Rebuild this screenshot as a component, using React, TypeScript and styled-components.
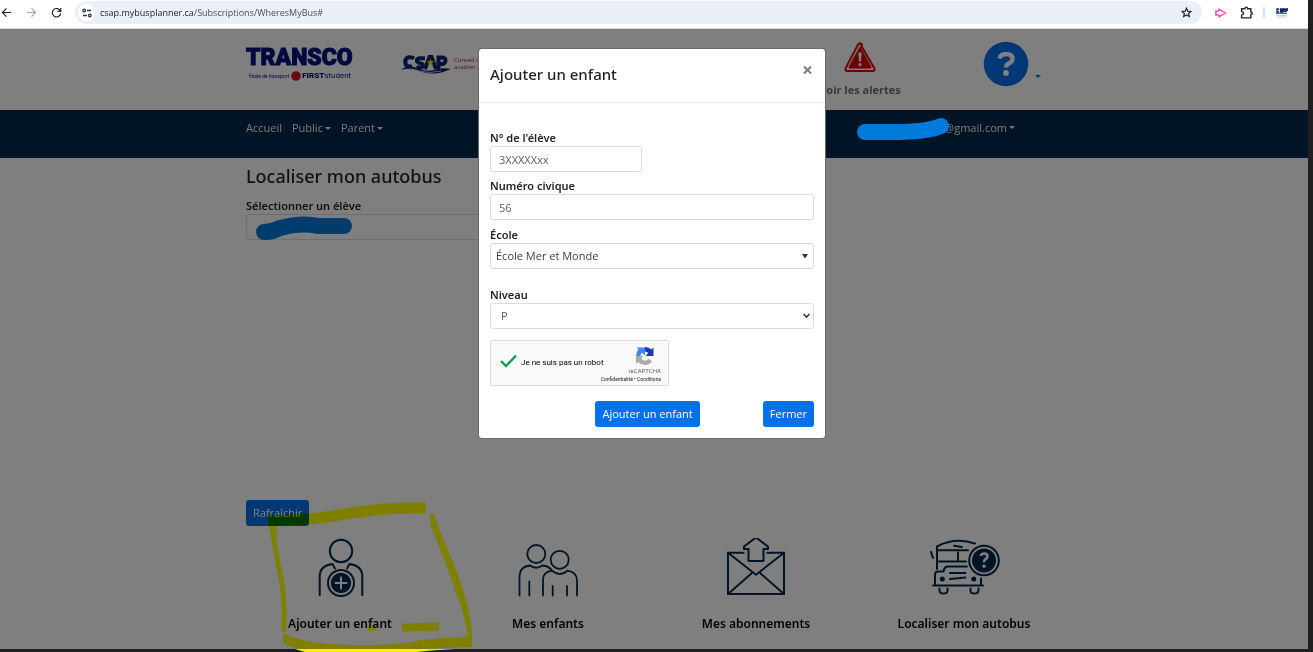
import React from "react";
import styled, { createGlobalStyle } from "styled-components";

const GlobalStyle = createGlobalStyle`
  * { box-sizing: border-box; }
  html, body { margin: 0; padding: 0; }
  body {
    font-family: "Open Sans", "Noto Sans", sans-serif;
    font-size: 11px;
    line-height: 16px;
    color: #212529;
    background: #1f1f1f;
  }
  button, input, select { font: inherit; color: inherit; }
  h1, h2, p { margin: 0; }
  a { color: inherit; text-decoration: none; }
`;

const navy = "#00294a";

/* Window */
const Screen = styled.div`
  display: flex;
  flex-direction: column;
  min-height: 100vh;
  padding: 0 5px 3px 0;
  background: #1f1f1f;
`;

const BrowserBar = styled.header`
  display: flex;
  align-items: center;
  height: 29px;
  padding: 1px 0 4px;
  overflow: hidden;
  background: #fff;
  border-bottom: 1px solid #d8d8d8;
`;

const IconButton = styled.button<{ $w?: number }>`
  display: flex;
  align-items: center;
  justify-content: center;
  flex: none;
  width: ${(p) => p.$w ?? 25}px;
  height: 22px;
  padding: 0;
  border: 0;
  background: none;
`;

const BackButtons = styled.div`
  display: flex;
  width: 75px;
  padding-right: 6px;
  margin-left: -6px;
  margin-right: 6px;
`;

const AddressPill = styled.div`
  display: flex;
  flex: 1;
  align-items: center;
  height: 23px;
  padding: 0 4px 0 3px;
  border-radius: 12px;
  background: #eaf0fa;
`;

const SiteInfo = styled.button`
  display: flex;
  align-items: center;
  justify-content: center;
  width: 17px;
  height: 17px;
  padding: 0;
  border: 0;
  border-radius: 50%;
  background: #fff;
`;

const Address = styled.p`
  flex: 1;
  padding-left: 5px;
  font-size: 9px;
  color: #4b4f54;
  white-space: nowrap;
  span { color: #1b1d20; }
`;

const Extensions = styled.div`
  display: flex;
  align-items: center;
  width: 106px;
  padding-left: 5px;
`;

const Divider = styled.span`
  width: 2px;
  height: 11px;
  margin: 0 4px;
  background: #cfe2fb;
`;

/* Page */
const Stage = styled.div`
  position: relative;
  display: flex;
  flex: 1;
  flex-direction: column;
  background: #fff;
`;

const Band = styled.div<{ $bg?: string; $h?: number }>`
  padding-right: 4px;
  background: ${(p) => p.$bg ?? "#fff"};
  ${(p) => (p.$h ? `height: ${p.$h}px;` : "")}
`;

const Container = styled.div`
  width: 100%;
  max-width: 832px;
  margin: 0 auto;
  padding: 0 10px;
`;

const HeaderRow = styled(Container)`
  display: grid;
  grid-template-columns: 155px 1fr 208px 94px;
  padding-top: 12px;
`;

const Transco = styled.a`
  display: block;
  padding-top: 3px;
  color: #00127c;
  white-space: nowrap;
`;

const TranscoName = styled.strong`
  display: block;
  font-family: Roboto, sans-serif;
  font-size: 23px;
  line-height: 27px;
  font-weight: 900;
  -webkit-text-stroke: 1px #00127c;
`;

const TranscoTag = styled.span`
  display: flex;
  align-items: center;
  padding-left: 3px;
  font-family: Roboto, sans-serif;
  font-size: 5px;
  line-height: 10px;
  b { font-size: 8px; font-weight: 900; }
  em { font-size: 8px; font-style: normal; }
  svg { margin: 0 1px 0 2px; }
`;

const Csap = styled.a`
  display: flex;
  align-items: flex-start;
  padding-top: 13px;
  gap: 3px;
  color: #c8102e;
  font-size: 6px;
  line-height: 7px;
  white-space: nowrap;
`;

const CsapText = styled.span`
  display: flex;
  flex-direction: column;
  padding-top: 3px;
`;

const AlertLink = styled.a`
  display: flex;
  flex-direction: column;
  align-items: center;
  gap: 9px;
  font-weight: 700;
  color: #6c757d;
`;

const HelpButton = styled.button`
  display: flex;
  align-items: flex-end;
  align-self: start;
  padding: 0 0 0 19px;
  border: 0;
  background: none;
  color: #0070eb;
`;

const Caret = styled.i<{ $drop?: boolean }>`
  display: inline-block;
  width: 0;
  height: 0;
  margin: ${(p) => (p.$drop ? "0 0 9px 6px" : "0 0 2px 2px")};
  border: 3px solid transparent;
  border-top-color: currentColor;
  border-bottom: 0;
`;

const NavRow = styled(Container).attrs({ as: "nav" })`
  display: flex;
  gap: 10px;
  padding-top: 10px;
  color: #f0f0f0;
`;

const Account = styled.a`
  display: flex;
  align-items: center;
  height: 16px;
  margin-left: auto;
  margin-right: 43px;
  white-space: nowrap;
`;

const Scribble = styled.svg`
  position: relative;
  z-index: 4;
  flex: none;
  margin-right: -6px;
`;

const Main = styled.main`
  display: flex;
  flex: 1;
  flex-direction: column;
  padding-right: 4px;
`;

const Content = styled(Container)`
  display: flex;
  flex: 1;
  flex-direction: column;
  align-items: flex-start;
  padding-top: 5px;
`;

const PageTitle = styled.h1`
  font-family: "Noto Sans", "Open Sans", sans-serif;
  font-size: 18px;
  line-height: 26px;
  font-weight: 500;
  margin-bottom: 9px;
`;

const Label = styled.label`
  display: block;
  font-family: "Noto Sans", "Open Sans", sans-serif;
  font-weight: 600;
`;

const control = `
  display: block;
  height: 26px;
  border: 1px solid #d9dee3;
  border-radius: 3px;
  background: #fff;
  color: #5a6068;
`;

const PupilPicker = styled.div`
  position: relative;
  width: 50%;
`;

const PupilSelect = styled.select`
  ${control}
  width: 100%;
  appearance: none;
`;

const PupilScribble = styled.svg`
  position: absolute;
  z-index: 1;
  left: 10px;
  top: 1px;
`;

const MapArea = styled.div`
  flex: 1;
  min-height: 259px;
`;

const Button = styled.button`
  height: 26px;
  padding: 0 7px;
  border: 0;
  border-radius: 3px;
  background: #0070eb;
  color: #fff;
  white-space: nowrap;
`;

const Tiles = styled.div`
  display: grid;
  grid-template-columns: repeat(4, 1fr);
  align-self: stretch;
  margin: 10px -10px 0;
`;

const Tile = styled.a`
  position: relative;
  display: flex;
  flex-direction: column;
  align-items: center;
  gap: 17px;
  height: 113px;
  padding-top: 2px;
  font-family: "Noto Sans", "Open Sans", sans-serif;
  font-size: 12px;
  line-height: 18px;
  font-weight: 600;
  color: #000;
  svg { flex: none; }
`;

const Marker = styled.svg<{ $solid?: boolean }>`
  position: absolute;
  z-index: 2;
  left: 26px;
  top: -38px;
  pointer-events: none;
  mix-blend-mode: ${(p) => (p.$solid ? "normal" : "multiply")};
`;

/* Modal */
const Backdrop = styled.div`
  position: absolute;
  z-index: 1;
  inset: 0;
  background: rgba(0, 0, 0, 0.5);
`;

const ModalLayer = styled.div`
  position: absolute;
  z-index: 5;
  inset: 0;
  display: flex;
  align-items: flex-start;
  justify-content: center;
  padding: 20px 4px 0 0;
  pointer-events: none;
`;

const Modal = styled.section`
  width: 346px;
  border-radius: 3px;
  background: #fff;
  box-shadow: 0 0 0 1px #6b6b6b;
  pointer-events: auto;
`;

const ModalHeader = styled.header`
  display: flex;
  justify-content: space-between;
  height: 54px;
  padding: 13px 11px 0;
  border-bottom: 1px solid #e9ecef;
`;

const ModalTitle = styled.h2`
  font-family: "Noto Sans", "Open Sans", sans-serif;
  font-size: 15px;
  line-height: 24px;
  font-weight: 500;
`;

const Close = styled.button`
  height: 18px;
  padding: 0;
  border: 0;
  background: none;
  color: #7d7d7d;
`;

const ModalForm = styled.form`
  display: flex;
  flex-direction: column;
  padding: 27px 11px 11px;
`;

const Field = styled.div<{ $gap?: number }>`
  margin-bottom: ${(p) => p.$gap ?? 6}px;
`;

const TextInput = styled.input<{ $short?: boolean }>`
  ${control}
  width: ${(p) => (p.$short ? "152px" : "100%")};
  padding: 0 8px;
`;

const SelectBox = styled.div`
  position: relative;
  svg { position: absolute; right: 3px; top: 8px; pointer-events: none; }
`;

const Select = styled.select<{ $inset: number; $dark?: boolean }>`
  ${control}
  width: 100%;
  padding: 0 20px 0 ${(p) => p.$inset}px;
  appearance: none;
  ${(p) => (p.$dark ? "color: #3d4146;" : "")}
`;

const Captcha = styled.div`
  display: flex;
  width: 179px;
  height: 46px;
  margin-bottom: 15px;
  border: 1px solid #dcdcdc;
  border-radius: 2px;
  background: #f9f9f9;
  font-family: Roboto, sans-serif;
`;

const CaptchaCheck = styled.label`
  display: flex;
  flex: 1;
  align-items: center;
  gap: 4px;
  padding-left: 9px;
  font-size: 8px;
  white-space: nowrap;
  color: #000;
  svg { margin-bottom: 4px; }
`;

const Tick = styled.input`
  width: 17px;
  height: 20px;
  margin: 0;
  appearance: none;
  position: absolute;
`;

const CaptchaBrand = styled.div`
  display: flex;
  flex-direction: column;
  align-items: flex-end;
  width: 60px;
  margin-left: -10px;
  padding: 5px 7px 0 0;
  font-size: 6px;
  line-height: 8px;
  color: #666;
  white-space: nowrap;
  svg { margin: 0 6px 1px 0; }
`;

const CaptchaLinks = styled.span`
  font-size: 5px;
  color: #222;
`;

const Actions = styled.div`
  display: flex;
  justify-content: flex-end;
  gap: 63px;
`;

const AlertIcon = () => (
  <svg width="34" height="32" viewBox="0 0 34 32">
    <path d="M17 2.5 31.5 27.5Q32 30 29.5 30H4.500Q2 30 2.500 27.500L14.800 4Q17 .5 19.200 4Z" fill="#fff" stroke="#d80000" strokeWidth="2" strokeLinejoin="round" />
    <path d="M17 7 27.500 26.500H6.500Z" fill="#d80000" stroke="#d80000" strokeWidth="2" strokeLinejoin="round" />
    <path d="M15.300 11.500h3.400l-.7 9h-2z" fill="#fff" />
    <circle cx="17" cy="23.500" r="1.600" fill="#fff" />
  </svg>
);

const HelpIcon = () => (
  <svg width="46" height="46" viewBox="0 0 46 46">
    <circle cx="23" cy="23" r="22.300" fill="#0070eb" />
    <path d="M16.500 17.500q1-4.500 6.500-4.500 6.500 0 6.500 4.700 0 3-3.700 4.700-2.800 1.300-2.800 4.200" fill="none" stroke="#fff" strokeWidth="4.400" />
    <circle cx="23" cy="32" r="2.900" fill="#fff" />
  </svg>
);

const CsapIcon = () => (
  <svg width="50" height="20" viewBox="0 0 50 20" fill="none">
    <g stroke="#0b2470" strokeWidth="4">
      <path d="M13 4.500Q11 3 8 3.300 4 4 4.300 8.500 4.500 12 8 12.500h3" />
      <path d="M24 4.200h-5q-4 .5-3 3.300 1 1.500 4 2 3 1 1.500 3.200-1 1.300-6 .6" />
      <path d="M24 15 28.500 3h2L35 15" />
      <path d="M37.500 16V3.500h4q3.500.500 3 3.500-.5 3-4 3H38" />
    </g>
    <path d="M0 15.500q7-5 16-1.500 9 4 17 2 8-3 17-1-7 3-12 4-8 1.500-17-1Q9 13.500 0 15.500Z" fill="#0b2470" />
    <path d="M1 17q8-4 17 0 10 3 22 0" stroke="#fff" strokeWidth=".7" />
    <path d="m29.500 4.800 1.100 2.500 2.700.2-2.100 1.800.7 2.700-2.400-1.500-2.400 1.500.7-2.700-2.100-1.800 2.700-.2Z" fill="#ffd900" />
  </svg>
);

const FirstMark = () => (
  <svg width="10" height="10" viewBox="0 0 10 10">
    <circle cx="5" cy="5" r="4.800" fill="#e01a22" />
    <path d="M2 7.500Q3 3 8 2.500M4 8q.5-3 4-3.500" fill="none" stroke="#8c1016" strokeWidth=".8" />
  </svg>
);

const AddChildIcon = () => (
  <svg width="58" height="60" viewBox="0 0 58 60" fill="none" stroke={navy} strokeWidth="2" strokeLinecap="round">
    <circle cx="30" cy="13" r="11.200" />
    <path d="M8.700 57V37Q9.500 27.500 21.500 26l2.500 4.500M51.300 57V37Q50.500 27.500 38.500 26L36 30.500" />
    <circle cx="30" cy="45" r="13" />
    <circle cx="30" cy="45" r="9.200" fill={navy} />
    <path d="M30 39.500v11M24.500 45h11" stroke="#fff" />
  </svg>
);

const ChildrenIcon = () => (
  <svg width="62" height="60" viewBox="0 0 62 60" fill="none" stroke={navy} strokeWidth="1.800" strokeLinecap="round">
    <circle cx="19.300" cy="16" r="9" />
    <circle cx="42.700" cy="21.800" r="9" />
    <path d="M2.500 57.500V38Q3 28.500 13 27.500q6 4.500 12.500 0 7 .5 9.500 5.500M12.300 43.500v14M26 57.500V41q.5-7 9-8.300 8 6.500 15.500 0Q59.500 34 60 42v15.500M35.700 48v9.500M50 48v9.500" />
  </svg>
);

const MailIcon = () => (
  <svg width="60" height="60" viewBox="0 0 60 60" fill="none" stroke={navy} strokeWidth="2">
    <path d="M18.500 14.700H2V56h56V14.700H40.500M2 14.700l28 22 28-22M2 56l24-21M58 56 34 35" />
    <path d="M30-.5 42 8.500v2.500h-4.500v12h-15V11H18V8.500Z" fill="#fff" strokeLinejoin="round" />
  </svg>
);

const BusIcon = () => (
  <svg width="72" height="60" viewBox="-1 0 72 60" fill="none" stroke={navy} strokeWidth="2" strokeLinecap="round">
    <path d="M8 31V8.500Q26-1 46 5.500M8 12.200h31M10 23.500h27M29 14.500v8M25 7.800l8 1.200M2 14l2 6" />
    <path d="M38 28.500H18q-3 1-3.500 5H9q-3 0-3 3V47M21 35h15.500M21 41l15.500-1.500M4 47.500h50M52 40.500V47" />
    <path d="M10.500 50.500v2q0 3 4 3t4-3v-2M41.500 50.500v2q0 3 4 3t4-3v-2" />
    <circle cx="13.300" cy="41" r="1.500" fill={navy} />
    <circle cx="44.800" cy="41" r="1.500" fill={navy} />
    <circle cx="55" cy="22.500" r="14.800" />
    <circle cx="55" cy="22.500" r="11" fill={navy} />
    <path d="M51.700 18q.5-2.500 3.500-2.500 3.300 0 3.300 3 0 1.500-2 2.700-1.500 1-1.500 3" stroke="#fff" strokeWidth="2.600" strokeLinecap="butt" />
    <circle cx="55" cy="28.200" r="1.700" fill="#fff" stroke="none" />
  </svg>
);

const Stroke = ({ d, size = 11, color = "currentColor" }: { d: string; size?: number; color?: string }) => (
  <svg width={size} height={size} viewBox="0 0 12 12" fill="none" stroke={color} strokeWidth="1.300">
    <path d={d} />
  </svg>
);

export default function App() {
  return (
    <>
      <GlobalStyle />
      <Screen>
        <BrowserBar>
          <BackButtons>
            <IconButton aria-label="Précédent"><Stroke d="M11 6H1.500M6 1.500 1.500 6 6 10.500" /></IconButton>
            <IconButton aria-label="Suivant"><Stroke color="#a3a3a3" d="M1 6h9.500M6 1.500 10.500 6 6 10.500" /></IconButton>
            <IconButton aria-label="Actualiser"><Stroke d="M10.300 4.500A4.600 4.600 0 1 0 10.600 7M10.700 1v3.700H7" /></IconButton>
          </BackButtons>
          <AddressPill>
            <SiteInfo aria-label="Informations du site">
              <svg width="10" height="10" viewBox="0 0 10 10" fill="none" stroke="#333" strokeWidth="1.300">
                <circle cx="2.200" cy="2.500" r="1.300" /><path d="M5 2.500h4M1 7.500h4" /><circle cx="7.800" cy="7.500" r="1.300" />
              </svg>
            </SiteInfo>
            <Address><span>csap.mybusplanner.ca</span>/Subscriptions/WheresMyBus#</Address>
            <IconButton $w={24} aria-label="Ajouter aux favoris">
              <Stroke d="m6 1.300 1.400 3.200 3.500.3-2.600 2.300.8 3.400L6 8.700l-3.100 1.800.8-3.400L1.100 4.800l3.500-.3Z" />
            </IconButton>
          </AddressPill>
          <Extensions>
            <IconButton $w={26} aria-label="Extension">
              <svg width="13" height="12" viewBox="0 0 13 12" fill="none" stroke="#ff4fb3" strokeWidth="1.400">
                <path d="M5 4V2.300L11.700 6 5 9.700V8M5 4H1.800v1M5 8H1.800V7M1 6h2" />
              </svg>
            </IconButton>
            <IconButton $w={26} aria-label="Extensions">
              <Stroke size={13} d="M1.500 2.500h3q.2-1.500 1.300-1.500T7 2.500h3v3q1.300.2 1.300 1.300T10 8v3H1.500V8.500Q3.300 8 3.300 6.800T1.500 5Z" />
            </IconButton>
            <Divider />
            <IconButton $w={26} aria-label="Profil">
              <svg width="12" height="10" viewBox="0 0 12 10">
                <path d="M3 1H1v3h2M7 1H4.500v1.500h2V4h-2.500M7.500 4V1H9v3M10 4V1h1.500v2" stroke="#0b2470" strokeWidth="1.300" fill="none" />
                <path d="M0 5.200h11" stroke="#0b2470" /><path d="M1 7.500h10M1 9h10" stroke="#eeb0b4" strokeWidth=".8" />
              </svg>
            </IconButton>
          </Extensions>
        </BrowserBar>

        <Stage>
          <Band $h={81}>
            <HeaderRow>
              <Transco href="#">
                <TranscoName>TRANSCO</TranscoName>
                <TranscoTag>filiale de transport<FirstMark /><b>FIRST</b><em>student</em></TranscoTag>
              </Transco>
              <Csap href="#"><CsapIcon /><CsapText><span>Conseil scolaire</span><span>acadien provincial</span></CsapText></Csap>
              <AlertLink href="#"><AlertIcon />Voir les alertes</AlertLink>
              <HelpButton aria-label="Aide"><HelpIcon /><Caret $drop /></HelpButton>
            </HeaderRow>
          </Band>
          <Band $bg={navy} $h={48}>
            <NavRow>
              <a href="#">Accueil</a>
              <a href="#">Public<Caret /></a>
              <a href="#">Parent<Caret /></a>
              <Account href="#">
                <Scribble width="94" height="24" viewBox="0 0 94 24">
                  <path d="M9 16H36Q72 16 85 10" fill="none" stroke="#007ad9" strokeWidth="16" strokeLinecap="round" />
                </Scribble>
                @gmail.com<Caret />
              </Account>
            </NavRow>
          </Band>
          <Main>
            <Content>
              <PageTitle>Localiser mon autobus</PageTitle>
              <Label htmlFor="eleve">Sélectionner un élève</Label>
              <PupilPicker>
                <PupilSelect id="eleve" />
                <PupilScribble width="98" height="26" viewBox="0 0 98 26">
                  <path d="M8 17Q16 17 24 13 46 7 62 11H88" fill="none" stroke="#007ad9" strokeWidth="16" strokeLinecap="round" />
                </PupilScribble>
              </PupilPicker>
              <MapArea />
              <Button type="button">Rafraîchir</Button>
              <Tiles>
                <Tile href="#">
                  <AddChildIcon />Ajouter un enfant
                  <Marker width="216" height="156" viewBox="262 498 216 156" fill="none" stroke="#ffff00">
                    <path d="M268 520Q310 521 345 514 385 507 426 508" strokeWidth="11" />
                    <path d="M271 522Q276 555 282 583 285 605 284 632" strokeWidth="5" />
                    <path d="M275 525 276 540" strokeWidth="3" />
                    <path d="M430 514h4Q441 536 451 557 471 605 472 636l-4 2Q465 615 457 596 448 568 431 527Z" fill="#ffff00" stroke="none" />
                    <path d="M283 633Q305 645 360 645 405 645 420 640L472 636V647Q440 648 430 649H300Q290 647 283 643Z" fill="#ffff00" stroke="none" />
                    <path d="M402 627.500 439 626.500" strokeWidth="8" />
                    <path d="M368 628H376" strokeWidth="6" />
                  </Marker>
                  <Marker $solid width="216" height="156" viewBox="262 498 216 156">
                    <path d="M295 649H455Q430 650 408 653H308Z" fill="#ffee00" />
                  </Marker>
                </Tile>
                <Tile href="#"><ChildrenIcon />Mes enfants</Tile>
                <Tile href="#"><MailIcon />Mes abonnements</Tile>
                <Tile href="#"><BusIcon />Localiser mon autobus</Tile>
              </Tiles>
            </Content>
          </Main>

          <Backdrop />
          <ModalLayer>
            <Modal role="dialog" aria-labelledby="modal-title">
              <ModalHeader>
                <ModalTitle id="modal-title">Ajouter un enfant</ModalTitle>
                <Close aria-label="Close">
                  <svg width="13" height="10" viewBox="0 0 13 10" stroke="currentColor" strokeWidth="2"><path d="m3 1.500 7 7m0-7-7 7" /></svg>
                </Close>
              </ModalHeader>
              <ModalForm>
                <Field>
                  <Label htmlFor="numero">N° de l'élève</Label>
                  <TextInput id="numero" $short defaultValue="3XXXXXxx" />
                </Field>
                <Field $gap={7}>
                  <Label htmlFor="civique">Numéro civique</Label>
                  <TextInput id="civique" defaultValue="56" />
                </Field>
                <Field $gap={18}>
                  <Label htmlFor="ecole">École</Label>
                  <SelectBox>
                    <Select id="ecole" $inset={5} $dark><option>École Mer et Monde</option></Select>
                    <svg width="12" height="10" viewBox="0 0 12 10"><path d="M3 3h6L6 7.500Z" fill="#333" /></svg>
                  </SelectBox>
                </Field>
                <Field $gap={11}>
                  <Label htmlFor="niveau">Niveau</Label>
                  <SelectBox>
                    <Select id="niveau" $inset={10}><option>P</option></Select>
                    <svg width="9" height="10" viewBox="0 0 9 10" fill="none" stroke="#333" strokeWidth="1.600"><path d="m1.500 3 3 3 3-3" /></svg>
                  </SelectBox>
                </Field>
                <Captcha>
                  <CaptchaCheck>
                    <Tick type="checkbox" defaultChecked />
                    <svg width="17" height="16" viewBox="0 0 17 16" fill="none" stroke="#0f9d58" strokeWidth="2.400"><path d="m1 8 5 5L16 2.500" /></svg>
                    Je ne suis pas un robot
                  </CaptchaCheck>
                  <CaptchaBrand>
                    <svg width="20" height="20" viewBox="0 0 20 20">
                      <path d="M10 1A9 9 0 0 1 16.500 3.500L18.500 1.500V10H10.500L13.300 7Q12 5.500 10 5.500Z" fill="#1c3aa9" />
                      <path d="M1 10A9 9 0 0 1 3.500 3.500L1.500 1.500H10V9.500L7 6.700Q5.500 8 5.500 10Z" fill="#4285f4" />
                      <path d="M1 10H8.500L6.300 12.500Q8 14.700 10 14.700 12 14.700 13.500 12.500L17 15.500Q14 19 10 19 6 19 3 16L1 18Z" fill="#ababab" />
                    </svg>
                    <span>reCAPTCHA</span>
                    <CaptchaLinks><a href="#">Confidentialité</a> • <a href="#">Conditions</a></CaptchaLinks>
                  </CaptchaBrand>
                </Captcha>
                <Actions>
                  <Button type="button">Ajouter un enfant</Button>
                  <Button type="button">Fermer</Button>
                </Actions>
              </ModalForm>
            </Modal>
          </ModalLayer>
        </Stage>
      </Screen>
    </>
  );
}
